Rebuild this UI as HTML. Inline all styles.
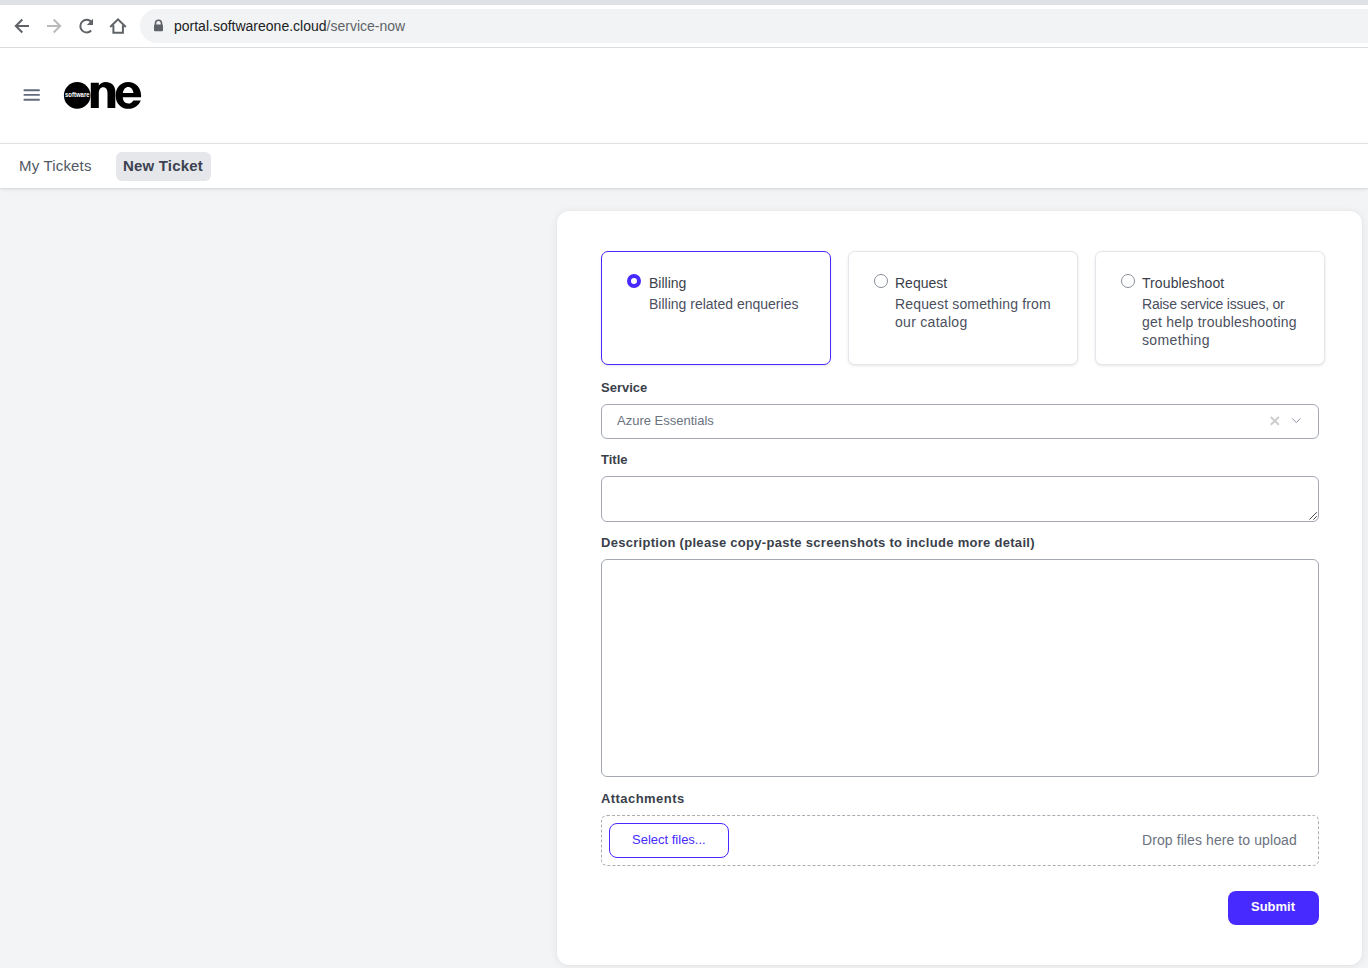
<!DOCTYPE html>
<html>
<head>
<meta charset="utf-8">
<style>
*{box-sizing:border-box;margin:0;padding:0}
html,body{width:1368px;height:968px;overflow:hidden}
body{background:#f3f4f6;font-family:"Liberation Sans",sans-serif;position:relative;color:#3f3f46}
.abs{position:absolute}
#tabstrip{left:0;top:0;width:1368px;height:5px;background:#dee1e6}
#toolbar{left:0;top:5px;width:1368px;height:42px;background:#fff}
#tbline{left:0;top:47px;width:1368px;height:1px;background:#dadce0}
#omni{left:140px;top:9px;width:1260px;height:34px;border-radius:17px;background:#f1f3f4}
#url{left:174px;top:17px;font-size:14px;line-height:18px;color:#202124;white-space:nowrap}
#url span{color:#5f6368}
#header{left:0;top:48px;width:1368px;height:95px;background:#fff}
#hline{left:0;top:143px;width:1368px;height:1px;background:#e5e7eb}
#nav{left:0;top:144px;width:1368px;height:44px;background:#fff;box-shadow:0 1px 5px rgba(0,0,0,0.09),0 1px 1px rgba(0,0,0,0.05)}
#mytickets{left:19px;top:157px;font-size:15px;line-height:18px;color:#525866;white-space:nowrap;letter-spacing:0.18px}
#newtab{left:116px;top:152px;width:95px;height:29px;border-radius:6px;background:#e5e7eb}
#newticket{left:123px;top:157px;font-size:15px;line-height:18px;font-weight:bold;color:#3c4250;white-space:nowrap;letter-spacing:0.18px}
#panel{left:557.4px;top:211.4px;width:805px;height:753.6px;background:#fff;border-radius:12px;box-shadow:0 1px 10px rgba(0,0,0,0.07),0 0 2px rgba(0,0,0,0.06)}
.card{position:absolute;top:251px;width:230px;height:114px;border-radius:7px;background:#fff;border:1px solid #e3e6ea;box-shadow:0 1px 3px rgba(0,0,0,0.10)}
.card.sel{border:1.5px solid #472aff}
.radio{position:absolute;width:14px;height:14px;border-radius:50%;border:1px solid #8a8f98;background:#fff}
.radio.on{border:4px solid #472aff}
.ct{position:absolute;font-size:14px;line-height:18px;color:#3a3f4b;white-space:nowrap}
.cd{position:absolute;font-size:14px;line-height:18px;color:#4b5060;white-space:nowrap}
.lbl{position:absolute;left:601px;font-size:13px;line-height:16px;font-weight:bold;color:#3a3f4b;white-space:nowrap}
.field{position:absolute;left:601px;width:718px;border:1px solid #a3a8b4;border-radius:6px;background:#fff}
</style>
</head>
<body>
<div class="abs" id="tabstrip"></div>
<div class="abs" id="toolbar"></div>
<div class="abs" id="tbline"></div>
<!-- browser icons -->
<svg class="abs" style="left:0;top:0" width="140" height="47" viewBox="0 0 140 47">
  <g fill="none" stroke-linecap="butt">
    <path d="M29 26H16.5 M22.3 19.5L15.8 26L22.3 32.5" stroke="#5f6368" stroke-width="2"/>
    <path d="M47 26H59.5 M53.7 19.5L60.2 26L53.7 32.5" stroke="#bababa" stroke-width="2"/>
    <path d="M91.2 30.5A6.3 6.3 0 1 1 91.2 21.8" stroke="#5f6368" stroke-width="2"/>
    <path d="M93 18.8V25H86.8Z" fill="#5f6368"/>
    <path d="M113.4 33.8V25.2 M122.9 33.8V25.2 M112.4 32.8H123.9 M110.2 27L118 19.3L125.8 27" stroke="#5f6368" stroke-width="2"/>
  </g>
</svg>
<div class="abs" id="omni"></div>
<svg class="abs" style="left:153px;top:19px" width="11" height="13" viewBox="0 0 11 13">
  <path d="M2.5 6V4.2A3 3 0 0 1 8.5 4.2V6" fill="none" stroke="#5f6368" stroke-width="1.6"/>
  <rect x="1" y="5.6" width="9" height="6.6" rx="1" fill="#5f6368"/>
</svg>
<div class="abs" id="url">portal.softwareone.cloud<span>/service-now</span></div>

<div class="abs" id="header"></div>
<div class="abs" id="hline"></div>
<svg class="abs" style="left:0;top:48px" width="160" height="95" viewBox="0 48 160 95">
  <g stroke="#636a7d" stroke-width="1.9" stroke-linecap="round">
    <path d="M24.4 90.25H39M24.4 94.9H39M24.4 99.7H39"/>
  </g>
  <circle cx="77.2" cy="95.4" r="13.3" fill="#000"/>
  <text x="65" y="97.2" font-family="Liberation Sans" font-weight="bold" font-size="6.6" fill="#fff" textLength="24.6" lengthAdjust="spacingAndGlyphs">software</text>
  <path d="M90.8 82.7H98.8V85.6C100.5 83.3 102.8 82 105.5 82C111.5 82 115.3 85.6 115.3 91.5V108.1H107.5V93.4C107.5 89.4 106 87.3 103.2 87.3C100.5 87.3 98.8 89.5 98.8 93.6V108.1H90.8Z" fill="#000"/>
  <path d="M128.2 82C121 82 115.6 87.8 115.6 95.4C115.6 103.2 121 108.8 128.4 108.8C134.3 108.8 138.8 105.4 140.8 100.4H133.3C132.3 102.4 130.6 103.5 128.4 103.5C125 103.5 122.8 101 122.8 97.3H141C141.1 96.7 141.1 96 141.1 95.4C141.1 87.8 135.5 82 128.2 82ZM122.9 92.9C123.4 89.3 125.5 87 128.2 87C131 87 133 89.3 133.4 92.9Z" fill="#000"/>
</svg>

<div class="abs" id="nav"></div>
<div class="abs" id="mytickets">My Tickets</div>
<div class="abs" id="newtab"></div>
<div class="abs" id="newticket">New Ticket</div>

<div class="abs" id="panel"></div>

<!-- cards -->
<div class="card sel" style="left:601px"></div>
<div class="card" style="left:848px"></div>
<div class="card" style="left:1095px"></div>
<div class="radio on" style="left:627px;top:274px"></div>
<div class="radio" style="left:874px;top:274px"></div>
<div class="radio" style="left:1120.5px;top:274px"></div>
<div class="ct" style="left:649px;top:274px">Billing</div>
<div class="cd" style="left:649px;top:295px">Billing related enqueries</div>
<div class="ct" style="left:895px;top:274px">Request</div>
<div class="cd" style="left:895px;top:295px"><span style="letter-spacing:0.15px">Request something from</span><br><span style="letter-spacing:0.29px">our catalog</span></div>
<div class="ct" style="left:1142px;top:274px;letter-spacing:0.09px">Troubleshoot</div>
<div class="cd" style="left:1142px;top:295px"><span style="letter-spacing:-0.22px">Raise service issues, or</span><br><span style="letter-spacing:0.22px">get help troubleshooting</span><br><span style="letter-spacing:0.37px">something</span></div>

<!-- form -->
<div class="lbl" style="top:380px">Service</div>
<div class="field" style="top:404px;height:35px"></div>
<div class="abs" style="left:617px;top:413px;font-size:13px;line-height:16px;color:#6b7280;white-space:nowrap">Azure Essentials</div>
<svg class="abs" style="left:1268px;top:414px" width="36" height="14" viewBox="1268 414 36 14">
  <path d="M1270.8 417L1278.8 424.8M1278.8 417L1270.8 424.8" stroke="#cccccc" stroke-width="1.9" fill="none"/>
  <path d="M1292.2 418.4L1296.3 422.6L1300.4 418.4" stroke="#8a93a6" stroke-width="1" fill="none"/>
</svg>

<div class="lbl" style="top:452px">Title</div>
<div class="field" style="top:476px;height:46px"></div>
<svg class="abs" style="left:1300px;top:500px" width="24" height="26" viewBox="1300 500 24 26"><path d="M1309.4 519.6L1316.8 512.2M1313.4 519.6L1316.8 516.2" stroke="#4a4a4a" stroke-width="1" fill="none"/></svg>

<div class="lbl" style="top:535px;letter-spacing:0.29px">Description (please copy-paste screenshots to include more detail)</div>
<div class="field" style="top:559px;height:218px"></div>

<div class="lbl" style="top:791px;letter-spacing:0.44px">Attachments</div>
<div class="abs" style="left:601px;top:815px;width:718px;height:51px;border:1px dashed #a8acb3;border-radius:6px"></div>
<div class="abs" style="left:609px;top:823px;width:120px;height:35px;border:1.5px solid #472aff;border-radius:8px"></div>
<div class="abs" style="left:632px;top:832px;font-size:13px;line-height:16px;color:#472aff;white-space:nowrap">Select files...</div>
<div class="abs" style="left:1142px;top:831px;font-size:14px;line-height:18px;color:#6b7280;white-space:nowrap;letter-spacing:0.09px">Drop files here to upload</div>

<div class="abs" style="left:1228px;top:891px;width:91px;height:34px;background:#472aff;border-radius:8px"></div>
<div class="abs" style="left:1251px;top:899px;font-size:13px;line-height:16px;font-weight:bold;color:#fff;white-space:nowrap">Submit</div>
</body>
</html>
